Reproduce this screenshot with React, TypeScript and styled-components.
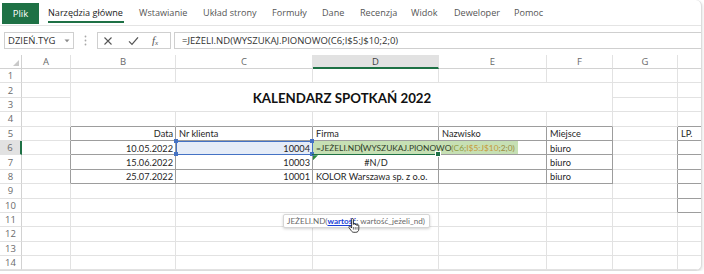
import React from "react"
import styled, { createGlobalStyle } from "styled-components"

const GlobalStyle = createGlobalStyle`
  body {
    margin: 0;
    background: #ffffff;
  }
`

const GREEN = "#1e7145"
const GRID = "#e2e2e2"
const DARK = "#9d9d9d"
const HEAD = "#d2d2d2"

const UI = `"Open Sans", "Noto Sans", sans-serif`
const SHEET = `Lato, "Noto Sans", sans-serif`

const COLS = [22, 49, 105, 137, 126, 108, 66, 65, 24]
const LETTERS = ["", "A", "B", "C", "D", "E", "F", "G", ""]
const ROWS = 14

const TABS = [
  { label: "Narzędzia główne", w: 91, active: true },
  { label: "Wstawianie", w: 64 },
  { label: "Układ strony", w: 69 },
  { label: "Formuły", w: 50 },
  { label: "Dane", w: 38 },
  { label: "Recenzja", w: 51 },
  { label: "Widok", w: 43 },
  { label: "Deweloper", w: 60 },
  { label: "Pomoc", w: 50 },
]

type Align = "left" | "right" | "center"

interface CellData {
  text: React.ReactNode
  align?: Align
}

//cell contents, key = row-col (col 1 = A)
const DATA: Record<string, CellData> = {
  "5-2": { text: "Data", align: "right" },
  "5-3": { text: "Nr klienta" },
  "5-4": { text: "Firma" },
  "5-5": { text: "Nazwisko" },
  "5-6": { text: "Miejsce" },
  "5-8": { text: "LP." },
  "6-2": { text: "10.05.2022", align: "right" },
  "6-3": { text: "10004", align: "right" },
  "6-6": { text: "biuro" },
  "7-2": { text: "15.06.2022", align: "right" },
  "7-3": { text: "10003", align: "right" },
  "7-4": { text: "#N/D", align: "center" },
  "7-6": { text: "biuro" },
  "8-2": { text: "25.07.2022", align: "right" },
  "8-3": { text: "10001", align: "right" },
  "8-4": { text: "KOLOR Warszawa sp. z o.o." },
  "8-6": { text: "biuro" },
}

const inTable = (r: number, c: number) =>
  (r >= 5 && r <= 8 && c >= 2 && c <= 6) || (r >= 5 && r <= 10 && c === 8)

const inTitle = (r: number, c: number) => r >= 2 && r <= 3 && c >= 2 && c <= 6

const App = () => {
  const cells: React.ReactNode[] = []

  for (let r = 1; r <= ROWS; r++) {
    cells.push(
      <RowHead key={`h${r}`} $active={r === 6}>
        {r}
      </RowHead>
    )
    for (let c = 1; c < COLS.length; c++) {
      if (inTitle(r, c) && !(r === 2 && c === 2)) continue
      const right = inTable(r, c) || inTable(r, c + 1) ? DARK : GRID
      const bottom = inTable(r, c) || inTable(r + 1, c) ? DARK : GRID

      if (r === 2 && c === 2) {
        cells.push(
          <Title key="title" $right={GRID} $bottom={GRID}>
            KALENDARZ SPOTKAŃ 2022
          </Title>
        )
        continue
      }

      const d = DATA[`${r}-${c}`]
      cells.push(
        <Cell
          key={`${r}-${c}`}
          $right={c === COLS.length - 1 ? "transparent" : right}
          $bottom={bottom}
          $align={d?.align}
          $ref={r === 6 && c === 3}
        >
          {d?.text}
          {r === 6 && c === 3 && (
            <>
              <Corner $x="left" $y="top" />
              <Corner $x="right" $y="top" />
              <Corner $x="left" $y="bottom" />
              <Corner $x="right" $y="bottom" />
            </>
          )}
          {r === 6 && c === 4 && (
            <>
              <Editor>
                =JEŻELI.ND<b>(</b>WYSZUKAJ.PIONOWO
                <Arg>(</Arg>
                <Arg $c="#8f9a3c">C6</Arg>
                <Arg>;</Arg>
                <Arg $c="#c79a3a">I$5:J$10</Arg>
                <Arg>;2;0)</Arg>
              </Editor>
              <ActiveLine />
              <Handle />
            </>
          )}
          {r === 7 && c === 4 && <ErrorMark />}
        </Cell>
      )
    }
  }

  return (
    <>
      <GlobalStyle />
      <Window>
        <Ribbon>
          <FileTab>Plik</FileTab>
          <Tabs>
            {TABS.map((t) => (
              <Tab key={t.label} $w={t.w}>
                <TabLabel $active={t.active}>{t.label}</TabLabel>
              </Tab>
            ))}
          </Tabs>
        </Ribbon>

        <FormulaBar>
          <NameBox>
            DZIEŃ.TYG
            <svg width="6" height="4" viewBox="0 0 6 4">
              <path d="M0.5 0.5 L3 3.2 L5.5 0.5 Z" fill="#8a8a8a" />
            </svg>
          </NameBox>
          <Grip>
            <svg width="3" height="11" viewBox="0 0 3 11">
              <circle cx="1.5" cy="1.5" r="0.9" fill="#a8a8a8" />
              <circle cx="1.5" cy="5.5" r="0.9" fill="#a8a8a8" />
              <circle cx="1.5" cy="9.5" r="0.9" fill="#a8a8a8" />
            </svg>
          </Grip>
          <Buttons>
            <svg width="10" height="10" viewBox="0 0 10 10">
              <path d="M1.5 1.5 L8.5 8.5 M8.5 1.5 L1.5 8.5" stroke="#555" strokeWidth="1.1" />
            </svg>
            <svg width="11" height="10" viewBox="0 0 11 10">
              <path d="M1 5.4 L4 8.4 L10 1.4" stroke="#555" strokeWidth="1.3" fill="none" />
            </svg>
            <Fx>
              f<sub>x</sub>
            </Fx>
          </Buttons>
          <Formula>=JEŻELI.ND(WYSZUKAJ.PIONOWO(C6;I$5:J$10;2;0)</Formula>
        </FormulaBar>

        <Sheet>
          <CornerHead />
          {LETTERS.slice(1).map((l, i) => (
            <ColHead key={i} $active={l === "D"}>
              {l}
            </ColHead>
          ))}
          {cells}

          <Tooltip>
            JEŻELI.ND(<ArgLink>wartość</ArgLink>; wartość_jeżeli_nd)
          </Tooltip>
          <HandCursor width="12" height="15" viewBox="0 0 12 15">
            <path
              d="M3.6 1.4 a0.9 0.9 0 0 1 1.8 0 V6.4 a0.9 0.9 0 0 1 1.8 0 V7 a0.9 0.9 0 0 1 1.8 0 V7.6 a0.9 0.9 0 0 1 1.8 0 V11 c0 2 -1.1 3.3 -3 3.3 H5.8 c-1.2 0 -1.9 -0.6 -2.5 -1.5 L1 9.6 a0.9 0.9 0 0 1 1.5 -1 L3.6 10 Z"
              fill="#ffffff"
              stroke="#111"
              strokeWidth="0.8"
              strokeLinejoin="round"
            />
            <path d="M5.4 9 V11.6 M7.2 9 V11.6 M9 9 V11.6" stroke="#111" strokeWidth="0.6" />
          </HandCursor>
        </Sheet>
      </Window>
    </>
  )
}

const Window = styled.div`
  position: relative;
  width: 702px;
  height: 271px;
  box-sizing: border-box;
  border-right: 1px solid #dcdcdc;
  border-bottom: 1px solid #dcdcdc;
  border-radius: 0 6px 6px 0;
  box-shadow: 1px 1px 3px rgba(0, 0, 0, 0.1);
  overflow: hidden;
  background: #ffffff;
`

const Ribbon = styled.div`
  display: flex;
  height: 26px;
  box-sizing: border-box;
  border-bottom: 1px solid #e4e4e4;
  padding-left: 2px;
  font-family: ${UI};
  font-size: 9.1px;
  color: #444;
`

const FileTab = styled.div`
  margin-top: 3px;
  width: 37px;
  height: 21px;
  background: ${GREEN};
  color: #ffffff;
  display: flex;
  align-items: center;
  justify-content: center;
  font-size: 9.5px;
`

const Tabs = styled.div`
  display: flex;
  margin-left: 9px;
`

const Tab = styled.div<{ $w: number }>`
  width: ${(p) => p.$w}px;
  padding-top: 6px;
  box-sizing: border-box;
  white-space: nowrap;
`

const TabLabel = styled.span<{ $active?: boolean }>`
  display: inline-block;
  line-height: 14px;
  padding: 0 1px 1px 0;
  border-bottom: 2px solid ${(p) => (p.$active ? GREEN : "transparent")};
  color: ${(p) => (p.$active ? "#222" : "#555")};
`

const FormulaBar = styled.div`
  display: flex;
  height: 17px;
  margin-top: 6px;
  font-family: ${UI};
  font-size: 9.5px;
  color: #333;
`

const NameBox = styled.div`
  margin-left: 4px;
  width: 70px;
  box-sizing: border-box;
  border: 1px solid #cfcfcf;
  display: flex;
  align-items: center;
  justify-content: space-between;
  padding: 0 3px 0 3px;
`

const Grip = styled.div`
  width: 23px;
  display: flex;
  align-items: center;
  justify-content: center;
`

const Buttons = styled.div`
  width: 74px;
  box-sizing: border-box;
  border: 1px solid #cfcfcf;
  display: flex;
  align-items: center;
  gap: 15px;
  padding-left: 5px;
`

const Fx = styled.span`
  font-family: "Liberation Serif", serif;
  font-style: italic;
  font-size: 11px;
  color: #555;
  margin-left: -2px;

  sub {
    font-size: 7px;
    vertical-align: -1px;
  }
`

const Formula = styled.div`
  flex: 1;
  margin-left: 3px;
  box-sizing: border-box;
  border: 1px solid #cfcfcf;
  border-right: none;
  display: flex;
  align-items: center;
  padding-left: 7px;
  white-space: nowrap;
`

const Sheet = styled.div`
  position: relative;
  display: grid;
  grid-template-columns: ${COLS.map((w) => `${w}px`).join(" ")};
  grid-template-rows: 14px repeat(${ROWS}, 14.4px);
  margin-top: 6px;
`

const CornerHead = styled.div`
  position: relative;
  box-sizing: border-box;
  border-right: 1px solid ${HEAD};
  border-bottom: 1px solid ${HEAD};

  &::after {
    content: "";
    position: absolute;
    right: 2px;
    bottom: 2px;
    width: 6px;
    height: 6px;
    background: #c9c9c9;
    clip-path: polygon(100% 0, 100% 100%, 0 100%);
  }
`

const ColHead = styled.div<{ $active?: boolean }>`
  box-sizing: border-box;
  border-right: 1px solid ${GRID};
  border-bottom: ${(p) => (p.$active ? `2px solid ${GREEN}` : `1px solid ${HEAD}`)};
  background: ${(p) => (p.$active ? "#e2e2e2" : "#ffffff")};
  display: flex;
  align-items: center;
  justify-content: center;
  font-family: ${UI};
  font-size: 9.5px;
  color: ${(p) => (p.$active ? "#3f3f3f" : "#6a6a6a")};
`

const RowHead = styled.div<{ $active?: boolean }>`
  box-sizing: border-box;
  border-right: ${(p) => (p.$active ? `2px solid ${GREEN}` : `1px solid ${HEAD}`)};
  border-bottom: 1px solid ${GRID};
  background: ${(p) => (p.$active ? "#e2e2e2" : "#ffffff")};
  display: flex;
  align-items: center;
  justify-content: center;
  font-family: ${UI};
  font-size: 9.5px;
  color: #6a6a6a;
`

const Cell = styled.div<{ $right: string; $bottom: string; $align?: Align; $ref?: boolean }>`
  position: relative;
  box-sizing: border-box;
  border-right: 1px solid ${(p) => p.$right};
  border-bottom: 1px solid ${(p) => p.$bottom};
  background: ${(p) => (p.$ref ? "#e5ecf7" : "transparent")};
  outline: ${(p) => (p.$ref ? "1px solid #4472c4" : "none")};
  outline-offset: -1px;
  display: flex;
  align-items: center;
  justify-content: ${(p) =>
    p.$align === "right" ? "flex-end" : p.$align === "center" ? "center" : "flex-start"};
  padding: 1px 2px 0 3px;
  font-family: ${SHEET};
  font-size: 9.2px;
  color: #262626;
  white-space: nowrap;
`

const Title = styled(Cell)`
  grid-column: span 5;
  grid-row: span 2;
  justify-content: center;
  font-size: 13.3px;
  font-weight: 700;
  color: #111;
  padding-top: 2px;
`

const Corner = styled.span<{ $x: "left" | "right"; $y: "top" | "bottom" }>`
  position: absolute;
  ${(p) => p.$x}: -2px;
  ${(p) => p.$y}: -2px;
  width: 4px;
  height: 4px;
  background: #4472c4;
  z-index: 2;
`

const Editor = styled.div`
  position: absolute;
  left: 0;
  top: 0;
  height: 100%;
  width: 205px;
  box-sizing: border-box;
  background: #c6e0b4;
  display: flex;
  align-items: center;
  padding: 1px 0 0 3px;
  font-size: 8.4px;
  color: #2f3d28;
  z-index: 1;

  b {
    font-weight: 900;
  }
`

const Arg = styled.span<{ $c?: string }>`
  color: ${(p) => p.$c ?? "#9a8c3c"};
`

const ActiveLine = styled.span`
  position: absolute;
  left: -1px;
  right: -1px;
  bottom: -1px;
  height: 1px;
  background: ${GREEN};
  z-index: 2;
`

const Handle = styled.span`
  position: absolute;
  right: -3px;
  bottom: -3px;
  width: 4px;
  height: 4px;
  background: ${GREEN};
  border: 1px solid #ffffff;
  z-index: 3;
`

const ErrorMark = styled.span`
  position: absolute;
  left: 0;
  top: 0;
  width: 5px;
  height: 5px;
  background: #2a8a3e;
  clip-path: polygon(0 0, 100% 0, 0 100%);
`

const Tooltip = styled.div`
  position: absolute;
  left: 283px;
  top: 159px;
  height: 14px;
  box-sizing: border-box;
  padding: 0 4px 0 3px;
  display: flex;
  align-items: center;
  background: #ffffff;
  border: 1px solid #d6d6d6;
  border-radius: 2px;
  box-shadow: 0 1px 3px rgba(0, 0, 0, 0.18);
  font-family: ${SHEET};
  font-size: 8.1px;
  color: #6a6a6a;
  white-space: nowrap;
  z-index: 4;
`

const ArgLink = styled.span`
  color: #1a3fd6;
  font-weight: 700;
  text-decoration: underline;
`

const HandCursor = styled.svg`
  position: absolute;
  left: 348px;
  top: 163px;
  z-index: 5;
`

export default App
